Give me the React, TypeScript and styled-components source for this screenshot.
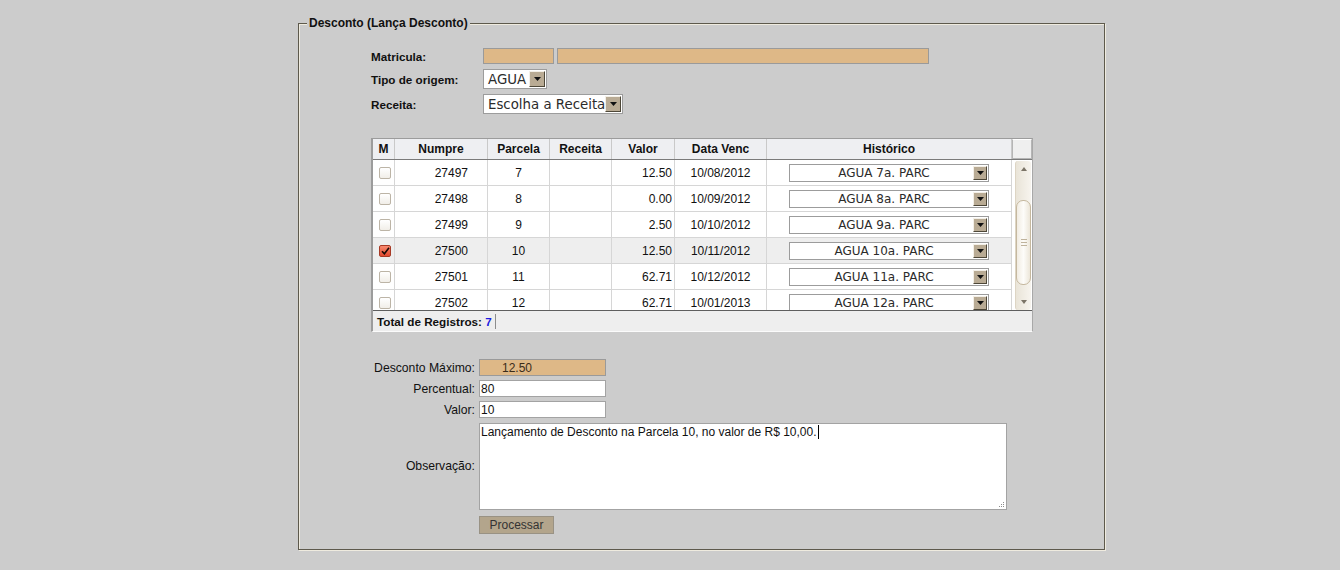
import React from 'react'
import styled, { createGlobalStyle, css } from 'styled-components'

type Parcela = {
    numpre: string,
    parcela: string,
    valor: string,
    venc: string,
    historico: string,
    checked?: boolean,
}

const parcelas: Array<Parcela> = [
    { numpre: '27497', parcela: '7', valor: '12.50', venc: '10/08/2012', historico: 'AGUA 7a. PARC' },
    { numpre: '27498', parcela: '8', valor: '0.00', venc: '10/09/2012', historico: 'AGUA 8a. PARC' },
    { numpre: '27499', parcela: '9', valor: '2.50', venc: '10/10/2012', historico: 'AGUA 9a. PARC' },
    { numpre: '27500', parcela: '10', valor: '12.50', venc: '10/11/2012', historico: 'AGUA 10a. PARC', checked: true },
    { numpre: '27501', parcela: '11', valor: '62.71', venc: '10/12/2012', historico: 'AGUA 11a. PARC' },
    { numpre: '27502', parcela: '12', valor: '62.71', venc: '10/01/2013', historico: 'AGUA 12a. PARC' },
]

const COLS = '22px 93px 62px 62px 63px 92px 245px'

const Arrow = () => (
    <svg width="7" height="4" viewBox="0 0 7 4">
        <path d="M0 0h7L3.5 4z" fill="#111" />
    </svg>
)

const Select = ({ value, width, height, size, center }: { value: string, width: number, height: number, size: number, center?: boolean }) => (
    <SelectBox $w={width} $h={height} $size={size}>
        <SelectText $center={center}>{value}</SelectText>
        <ArrowButton $w={height - 4}>
            <Arrow />
        </ArrowButton>
    </SelectBox>
)

const Checkbox = ({ checked }: { checked?: boolean }) => (
    <Check $on={checked}>
        {checked ? (
            <svg width="9" height="8" viewBox="0 0 9 8">
                <path d="M1 4.2l2.4 2.6L8 0.8" fill="none" stroke="#1a0a06" strokeWidth="1.6" />
            </svg>
        ) : null}
    </Check>
)

export default function App() {
    return (
        <Page>
            <GlobalStyle />
            <Fieldset>
                <Legend>Desconto (Lança Desconto)</Legend>
                <Content>
                    <TopForm>
                        <FieldLabel>Matricula:</FieldLabel>
                        <Pair>
                            <Tinted $w={71} />
                            <Tinted $w={372} />
                        </Pair>
                        <FieldLabel>Tipo de origem:</FieldLabel>
                        <Select value="AGUA" width={64} height={20} size={13.33} />
                        <FieldLabel>Receita:</FieldLabel>
                        <Select value="Escolha a Receita" width={140} height={20} size={13.33} />
                    </TopForm>

                    <Grid>
                        <HeaderRow>
                            <HeadCell>M</HeadCell>
                            <HeadCell>Numpre</HeadCell>
                            <HeadCell>Parcela</HeadCell>
                            <HeadCell>Receita</HeadCell>
                            <HeadCell>Valor</HeadCell>
                            <HeadCell>Data Venc</HeadCell>
                            <HeadCell>Histórico</HeadCell>
                            <HeadCorner />
                        </HeaderRow>
                        <Body>
                            <Rows>
                                {parcelas.map((p) => (
                                    <Row key={p.numpre} $selected={p.checked}>
                                        <Cell $align="center"><Checkbox checked={p.checked} /></Cell>
                                        <Cell $align="right" $pad={19}>{p.numpre}</Cell>
                                        <Cell $align="center">{p.parcela}</Cell>
                                        <Cell $align="center" />
                                        <Cell $align="right" $pad={2}>{p.valor}</Cell>
                                        <Cell $align="center">{p.venc}</Cell>
                                        <Cell $align="center">
                                            <Select value={p.historico} width={200} height={18} size={12} center />
                                        </Cell>
                                    </Row>
                                ))}
                            </Rows>
                            <ScrollGutter>
                                <Track>
                                    <ScrollArrow>
                                        <svg width="6" height="4" viewBox="0 0 6 4"><path d="M0 4h6L3 0z" fill="#7b7467" /></svg>
                                    </ScrollArrow>
                                    <Thumb>
                                        <Grip />
                                        <Grip />
                                        <Grip />
                                    </Thumb>
                                    <ScrollArrow $bottom>
                                        <svg width="6" height="4" viewBox="0 0 6 4"><path d="M0 0h6L3 4z" fill="#7b7467" /></svg>
                                    </ScrollArrow>
                                </Track>
                            </ScrollGutter>
                        </Body>
                        <Footer>
                            <FooterCell>
                                Total de Registros: <Count>7</Count>
                            </FooterCell>
                        </Footer>
                    </Grid>

                    <BottomForm>
                        <SideLabel>Desconto Máximo:</SideLabel>
                        <TextInput readOnly defaultValue="12.50" $tinted />
                        <SideLabel>Percentual:</SideLabel>
                        <TextInput defaultValue="80" />
                        <SideLabel>Valor:</SideLabel>
                        <TextInput defaultValue="10" />
                        <SideLabel>Observação:</SideLabel>
                        <Memo role="textbox">
                            Lançamento de Desconto na Parcela 10, no valor de R$ 10,00.<Caret />
                            <Resize width="7" height="7" viewBox="0 0 7 7">
                                <g fill="#8d8d8d">
                                    <rect x="5" y="1" width="1" height="1" />
                                    <rect x="3" y="3" width="1" height="1" />
                                    <rect x="5" y="3" width="1" height="1" />
                                    <rect x="1" y="5" width="1" height="1" />
                                    <rect x="3" y="5" width="1" height="1" />
                                    <rect x="5" y="5" width="1" height="1" />
                                </g>
                            </Resize>
                        </Memo>
                        <span />
                        <Button type="button">Processar</Button>
                    </BottomForm>
                </Content>
            </Fieldset>
        </Page>
    )
}

const GlobalStyle = createGlobalStyle`
    html, body {
        margin: 0;
        padding: 0;
        background: #cccccc;
    }
    body {
        font-family: "Liberation Sans", Arial, sans-serif;
        font-size: 12px;
        color: #111;
    }
    * {
        box-sizing: border-box;
    }
`
const Page = styled.div`
    padding: 16px 0 0 298px;
    min-height: 570px;
`
const Fieldset = styled.fieldset`
    width: 807px;
    margin: 0;
    padding: 0;
    min-width: 0;
    border: 1px solid #5d594c;
    box-shadow: 1px 1px 0 #efebdf, inset 1px 1px 0 #efebdf;
`
const Legend = styled.legend`
    margin-left: 8px;
    padding: 0 2px;
    background: #cccccc;
    font-size: 12px;
    font-weight: bold;
    line-height: 14px;
    color: #111;
`
const Content = styled.div`
    padding: 18px 0 15px 72px;
`
const TopForm = styled.div`
    display: grid;
    grid-template-columns: 112px auto;
    row-gap: 5px;
    align-items: center;
    justify-items: start;
`
const FieldLabel = styled.label`
    font-size: 11.7px;
    font-weight: bold;
    color: #111;
`
const Pair = styled.div`
    display: flex;
    gap: 3px;
`
const Tinted = styled.div<{ $w: number }>`
    width: ${({ $w }) => $w}px;
    height: 16px;
    background: #deb887;
    border: 1px solid #9a9a9a;
`
const SelectBox = styled.div<{ $w: number, $h: number, $size: number }>`
    display: flex;
    align-items: stretch;
    width: ${({ $w }) => $w}px;
    height: ${({ $h }) => $h}px;
    padding: 1px;
    background: #fff;
    border: 1px solid #9c9c9c;
    font-family: "DejaVu Sans", sans-serif;
    font-size: ${({ $size }) => $size}px;
    color: #2b2b2b;
`
const SelectText = styled.span<{ $center?: boolean }>`
    flex: 1;
    display: flex;
    align-items: center;
    justify-content: ${({ $center }) => $center ? 'center' : 'flex-start'};
    padding-left: ${({ $center }) => $center ? '4px' : '3px'};
    white-space: nowrap;
    overflow: hidden;
`
const ArrowButton = styled.span<{ $w: number }>`
    width: ${({ $w }) => $w}px;
    display: flex;
    align-items: center;
    justify-content: center;
    background: #b9ab94;
    border: 1px solid;
    border-color: #f3efe7 #4d4738 #4d4738 #f3efe7;
`
const Grid = styled.div`
    width: 662px;
    margin-top: 24px;
    background: #fff;
    border-style: solid;
    border-width: 1px 1px 1px 2px;
    border-color: #9c9c9c #a8a8a8 #fbfbfb #9c9c9c;
`
const HeaderRow = styled.div`
    display: grid;
    grid-template-columns: ${COLS} 20px;
    height: 21px;
    background: #eeeff2;
    border-bottom: 1px solid #7a7a7a;
`
const HeadCell = styled.div`
    display: flex;
    align-items: center;
    justify-content: center;
    border-right: 1px solid #c9c9c9;
    font-size: 12px;
    font-weight: bold;
    color: #111;
`
const HeadCorner = styled.div`
    background: #efefef;
    border: 1px solid #b5b5b5;
    border-top-color: #fff;
`
const Body = styled.div`
    display: flex;
    height: 151px;
    overflow: hidden;
    border-bottom: 1px solid #5e5e5e;
`
const Rows = styled.div`
    width: 639px;
`
const Row = styled.div<{ $selected?: boolean }>`
    display: grid;
    grid-template-columns: ${COLS};
    height: 26px;
    background: ${({ $selected }) => $selected ? '#eeeeee' : '#fff'};
`
const Cell = styled.div<{ $align: 'left' | 'center' | 'right', $pad?: number }>`
    display: flex;
    align-items: center;
    border-right: 1px solid #d6d6d6;
    border-bottom: 1px solid #d6d6d6;
    font-size: 12px;
    color: #111;
    ${({ $align, $pad }) => $align === 'right' ? css`
        justify-content: flex-end;
        padding-right: ${$pad || 0}px;
    ` : css`
        justify-content: center;
    `}
`
const Check = styled.span<{ $on?: boolean }>`
    width: 12px;
    height: 12px;
    margin-left: 3px;
    display: flex;
    align-items: center;
    justify-content: center;
    border-radius: 2px;
    ${({ $on }) => $on ? css`
        border: 1px solid #a73a25;
        background: linear-gradient(#f88a70, #e24a2f);
    ` : css`
        border: 1px solid #bcb4a6;
        background: linear-gradient(#ffffff, #f1eee8);
    `}
`
const ScrollGutter = styled.div`
    width: 20px;
    padding: 1px 1px 0 3px;
    background: #fff;
`
const Track = styled.div`
    height: 149px;
    display: flex;
    flex-direction: column;
    align-items: center;
    background: linear-gradient(90deg, #e9e4d8, #f7f4ee);
    border-left: 1px solid #ddd5c4;
    border-radius: 3px;
`
const ScrollArrow = styled.div<{ $bottom?: boolean }>`
    height: 16px;
    width: 100%;
    display: flex;
    align-items: center;
    justify-content: center;
    ${({ $bottom }) => $bottom && css`
        margin-top: auto;
    `}
`
const Thumb = styled.div`
    margin-top: 23px;
    width: 15px;
    height: 85px;
    display: flex;
    flex-direction: column;
    align-items: center;
    justify-content: center;
    gap: 2px;
    border: 1px solid #c5b89f;
    border-radius: 7px;
    background: linear-gradient(90deg, #f1ece2, #fdfcf9 50%, #ece6d9);
`
const Grip = styled.span`
    width: 6px;
    height: 1px;
    background: #bfb39c;
`
const Footer = styled.div`
    height: 20px;
    display: flex;
    align-items: center;
    background: #eeeeee;
    padding-left: 4px;
`
const FooterCell = styled.span`
    padding-right: 3px;
    border-right: 1px solid #8c8c8c;
    font-size: 11.7px;
    font-weight: bold;
    line-height: 15px;
    color: #111;
`
const Count = styled.span`
    color: #1b1be0;
`
const BottomForm = styled.div`
    display: grid;
    grid-template-columns: 104px auto;
    column-gap: 4px;
    row-gap: 4px;
    align-items: center;
    justify-items: start;
    margin-top: 27px;
`
const SideLabel = styled.label`
    justify-self: end;
    font-size: 12.2px;
    color: #111;
`
const TextInput = styled.input<{ $tinted?: boolean }>`
    width: 127px;
    height: 17px;
    margin: 0;
    padding: 0 1px;
    border: 1px solid #a3a3a3;
    background: #fff;
    font-family: "Liberation Sans", Arial, sans-serif;
    font-size: 12px;
    color: #111;
    outline: none;
    ${({ $tinted }) => $tinted && css`
        background: #deb887;
        border-color: #9a9a9a;
        padding-left: 22px;
        color: #3a2c1a;
    `}
`
const Memo = styled.div`
    position: relative;
    margin-top: 1px;
    width: 528px;
    height: 87px;
    padding: 1px 1px;
    background: #fff;
    border: 1px solid #a3a3a3;
    font-size: 12px;
    line-height: 14px;
    color: #111;
`
const Caret = styled.span`
    display: inline-block;
    width: 1px;
    height: 14px;
    margin-left: 1px;
    vertical-align: top;
    background: #000;
`
const Resize = styled.svg`
    position: absolute;
    right: 1px;
    bottom: 1px;
`
const Button = styled.button`
    margin-top: 2px;
    width: 75px;
    height: 18px;
    padding: 0;
    background: #b3a58c;
    border: 1px solid #999284;
    font-family: "Liberation Sans", Arial, sans-serif;
    font-size: 12px;
    color: #333;
`
